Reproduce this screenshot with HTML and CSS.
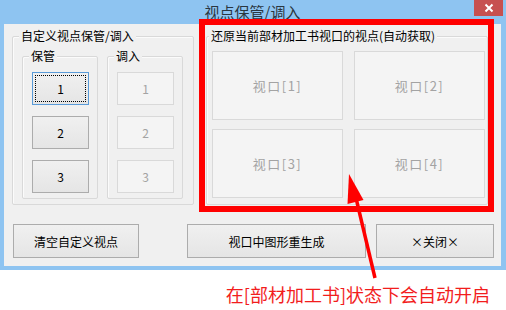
FILE: index.html
```html
<!DOCTYPE html>
<html lang="zh-CN">

<head>
    <meta charset="UTF-8">
    <meta name="viewport" content="width=device-width, initial-scale=1.0">
    <title>视点保管/调入</title>
    <link rel="stylesheet" href="styles.css">
</head>

<body>
    <div class="window">
        <div class="title-bar">
            <span class="title-text">视点保管/调入</span>
            <button class="close-btn">
                <svg width="10" height="10" viewBox="0 0 10 10">
                    <path d="M1.5 1.5 L8.5 8.5 M8.5 1.5 L1.5 8.5" stroke="#fff" stroke-width="2" />
                </svg>
            </button>
        </div>
        <div class="window-body">
            <div class="top-row">
                <div class="group custom-group">
                    <span class="group-label">自定义视点保管/调入</span>
                    <div class="sub-groups">
                        <div class="group sub-group">
                            <span class="group-label">保管</span>
                            <button class="win-btn slot-btn is-focused">1</button>
                            <button class="win-btn slot-btn">2</button>
                            <button class="win-btn slot-btn">3</button>
                        </div>
                        <div class="group sub-group">
                            <span class="group-label">调入</span>
                            <button class="win-btn slot-btn" disabled>1</button>
                            <button class="win-btn slot-btn" disabled>2</button>
                            <button class="win-btn slot-btn" disabled>3</button>
                        </div>
                    </div>
                </div>
                <div class="group view-group">
                    <span class="group-label">还原当前部材加工书视口的视点(自动获取)</span>
                    <div class="view-grid">
                        <button class="win-btn view-btn" disabled>视口[1]</button>
                        <button class="win-btn view-btn" disabled>视口[2]</button>
                        <button class="win-btn view-btn" disabled>视口[3]</button>
                        <button class="win-btn view-btn" disabled>视口[4]</button>
                    </div>
                </div>
            </div>
            <div class="bottom-row">
                <button class="win-btn clear-btn">清空自定义视点</button>
                <button class="win-btn regen-btn">视口中图形重生成</button>
                <button class="win-btn quit-btn">×关闭×</button>
            </div>
        </div>
    </div>
    <p class="note">在[部材加工书]状态下会自动开启</p>

    <!-- red annotation drawn on top of the dialog -->
    <div class="mark-box"></div>
    <svg class="mark-arrow" width="506" height="310" viewBox="0 0 506 310">
        <line x1="356" y1="198" x2="375" y2="278" stroke="#f00" stroke-width="3.5" />
        <polygon points="349,174 347.5,204 363.5,200" fill="#f00" />
    </svg>
</body>

</html>
```

FILE: styles.css
```css
body {
    margin: 0;
    width: 506px;
    height: 310px;
    position: relative;
    overflow: hidden;
    background-color: white;
    font-family: "Noto Sans CJK SC", sans-serif;
}

button {
    font-family: "Noto Sans CJK SC", sans-serif;
    cursor: pointer;
}

.window {
    border: solid #8ec4f1;
    border-width: 0 5px 4px 4px;
    background-color: #f0f0f0;
}

.title-bar {
    height: 24px;
    position: relative;
    display: flex;
    justify-content: center;
    align-items: center;
    background-color: #8ec4f1;
}

.title-text {
    font-size: 15px;
    line-height: 20px;
    color: #2a3640;
}

.close-btn {
    position: absolute;
    top: 0;
    right: -2px;
    width: 29px;
    height: 16px;
    padding: 0;
    border: none;
    display: flex;
    justify-content: center;
    align-items: center;
    background-color: #c75050;
}

.window-body {
    padding: 12px 0 8px 0;
}

.top-row {
    display: flex;
    align-items: flex-start;
}

.group {
    border: 1px solid #d9d9d9;
    border-radius: 2px;
    box-shadow: inset 1px 1px 0 #fbfbfb;
}

.group-label {
    display: block;
    width: fit-content;
    margin: -8px 0 0 6px;
    padding: 0 2px;
    font-size: 12px;
    line-height: 14px;
    color: black;
    background-color: #f0f0f0;
}

.custom-group {
    width: 182px;
    box-sizing: border-box;
    margin-left: 8px;
    padding-bottom: 5px;
}

.sub-groups {
    display: flex;
    gap: 9px;
    margin: 13px 0 0 9px;
}

.sub-group {
    width: 76px;
    box-sizing: border-box;
    display: flex;
    flex-direction: column;
    gap: 11px;
    padding: 0 0 5px 9px;
}

.sub-group .group-label {
    margin-left: -3px;
    margin-bottom: -2px;
}

.win-btn {
    padding: 0;
    font-size: 12px;
    color: black;
    border: 1px solid #acacac;
    background: linear-gradient(#f0f0f0, #e5e5e5);
}

.win-btn:disabled {
    color: #a3a3a3;
    border-color: #d9d9d9;
    background: #f4f4f4;
    cursor: default;
}

.slot-btn {
    width: 57px;
    height: 33px;
    font-size: 12px;
}

.is-focused {
    border-color: #5a9bd8;
    outline: 1px dotted #000;
    outline-offset: -4px;
}

.view-group {
    width: 282px;
    box-sizing: border-box;
    margin-left: 12px;
}

.view-group .group-label {
    margin-left: 2px;
}

.view-grid {
    display: grid;
    grid-template-columns: 131px 131px;
    grid-auto-rows: 69px;
    column-gap: 11px;
    row-gap: 9px;
    margin: 8px 2px 6px 5px;
}

.view-btn {
    font-size: 13px;
    letter-spacing: 1.5px;
    color: #9a9a9a;
}

.bottom-row {
    display: flex;
    margin-top: 19px;
}

.bottom-row .win-btn {
    height: 34px;
}

.clear-btn {
    width: 126px;
    margin-left: 9px;
}

.regen-btn {
    width: 179px;
    margin-left: 48px;
}

.quit-btn {
    width: 118px;
    margin-left: 10px;
}

.note {
    margin: 12px 16px 0 0;
    text-align: right;
    font-size: 18px;
    line-height: 24px;
    color: #f21d1d;
}

.mark-box {
    position: absolute;
    left: 199px;
    top: 19px;
    width: 295px;
    height: 193px;
    box-sizing: border-box;
    border: 6px solid #ff0000;
}

.mark-arrow {
    position: absolute;
    left: 0;
    top: 0;
    pointer-events: none;
}
```
